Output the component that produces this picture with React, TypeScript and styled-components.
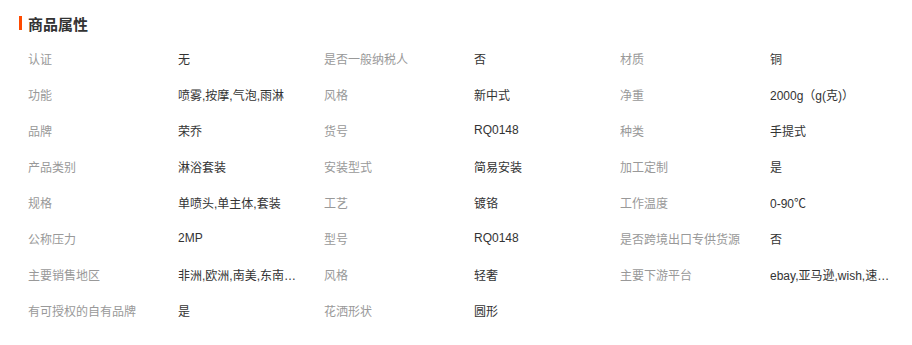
import React from 'react'
import styled, { createGlobalStyle } from 'styled-components'

const GlobalStyle = createGlobalStyle`
    body {
        margin: 0;
        background: #fff;
        font-family: "Liberation Sans", "Noto Sans CJK SC", sans-serif;
    }
`

const Section = styled.section`
    width: 912px;
    height: 345px;
    box-sizing: border-box;
    padding-top: 14px;
`

const Title = styled.h3`
    display: flex;
    align-items: center;
    gap: 6px;
    margin: 0 0 8px 19px;
    height: 18px;
    font-size: 15px;
    font-weight: bold;
    color: #333;

    &::before {
        content: '';
        width: 3px;
        height: 14px;
        background: #ff4a00;
    }
`

const Table = styled.div`
    display: grid;
    grid-template-columns: repeat(3, 150px 146px);
    grid-auto-rows: 36px;
    padding-left: 28px;
    font-size: 12px;
`

const Cell = styled.div<{ $label?: boolean }>`
    display: flex;
    align-items: center;
    color: ${(p) => (p.$label ? '#999' : '#333')};
    min-width: 0;

    span {
        max-width: ${(p) => (p.$label ? 'none' : '120px')};
        white-space: nowrap;
        overflow: hidden;
        text-overflow: ellipsis;
    }
`

const attrs: [string, string][] = [
    ['认证', '无'],
    ['是否一般纳税人', '否'],
    ['材质', '铜'],
    ['功能', '喷雾,按摩,气泡,雨淋'],
    ['风格', '新中式'],
    ['净重', '2000g（g(克)）'],
    ['品牌', '荣乔'],
    ['货号', 'RQ0148'],
    ['种类', '手提式'],
    ['产品类别', '淋浴套装'],
    ['安装型式', '简易安装'],
    ['加工定制', '是'],
    ['规格', '单喷头,单主体,套装'],
    ['工艺', '镀铬'],
    ['工作温度', '0-90℃'],
    ['公称压力', '2MP'],
    ['型号', 'RQ0148'],
    ['是否跨境出口专供货源', '否'],
    ['主要销售地区', '非洲,欧洲,南美,东南亚,北美,中东'],
    ['风格', '轻奢'],
    ['主要下游平台', 'ebay,亚马逊,wish,速卖通,独立站'],
    ['有可授权的自有品牌', '是'],
    ['花洒形状', '圆形'],
]

const App = () => {
    return (
        <Section>
            <GlobalStyle />
            <Title>商品属性</Title>
            <Table>
                {attrs.map(([k, v], i) => (
                    <React.Fragment key={i}>
                        <Cell $label>
                            <span>{k}</span>
                        </Cell>
                        <Cell>
                            <span title={v}>{v}</span>
                        </Cell>
                    </React.Fragment>
                ))}
            </Table>
        </Section>
    )
}

export default App
